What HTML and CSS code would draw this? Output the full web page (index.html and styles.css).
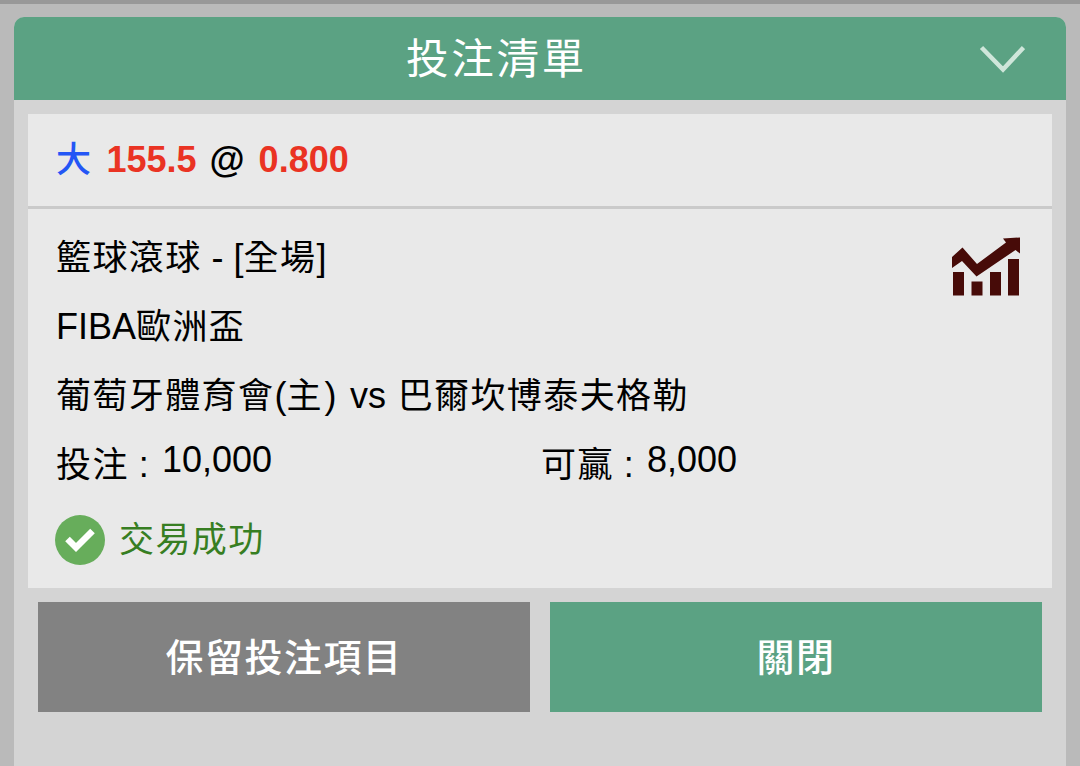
FILE: index.html
```
<!DOCTYPE html>
<html lang="zh-Hant">
<head>
    <meta charset="UTF-8">
    <meta name="viewport" content="width=device-width, initial-scale=1.0">
    <title>投注清單</title>
    <link rel="stylesheet" href="styles.css">
</head>
<body>
    <div class="bet-slip">
        <div class="slip-header">
            <div class="slip-title">投注清單</div>
            <svg class="chevron" viewBox="0 0 46 28" width="46" height="28">
                <path d="M2.500 2.500 L24 24.500 L44.500 2.500" fill="none" stroke="#cfe6da" stroke-width="4.500"/>
            </svg>
        </div>
        <div class="slip-card">
            <div class="odds-row">
                <span class="pick zh">大</span>
                <span class="line">155.5</span>
                <span class="at">@</span>
                <span class="odds">0.800</span>
            </div>
            <div class="details">
                <div class="info">
                    <p><span class="zh">籃球滾球</span> - [<span class="zh">全場</span>]</p>
                    <p>FIBA<span class="zh">歐洲盃</span></p>
                    <p class="teams"><span class="zh">葡萄牙體育會</span>(<span class="zh">主</span><span class="paren">)</span> vs <span class="zh">巴爾坎博泰夫格勒</span></p>
                </div>
                <svg class="stats-icon" viewBox="0 0 70 60" width="70" height="60">
                    <path d="M1 20 L11.500 10.500 L26 27 L55 5.500 L52 1.500 L69 0.500 L69 16.500 L64.500 13 L25.500 39.500 L11 24 L1 31 Z" fill="#470b08"/>
                    <path d="M2 35h11v23.500H2z M20.500 44.500h11v14h-11z M39 35h11v23.500H39z M57 22h11v36.500H57z" fill="#470b08"/>
                </svg>
            </div>
            <div class="amounts">
                <div class="amount"><span class="label"><span class="zh">投注</span> :</span><span class="value">10,000</span></div>
                <div class="amount"><span class="label"><span class="zh">可贏</span> :</span><span class="value">8,000</span></div>
            </div>
            <div class="status">
                <svg class="check" viewBox="0 0 50 50" width="50" height="50">
                    <circle cx="25" cy="25" r="25" fill="#67ad5b"/>
                    <path d="M12.500 24 L21 32.500 L37.500 16" fill="none" stroke="#fff" stroke-width="6.500"/>
                </svg>
                <span class="zh">交易成功</span>
            </div>
        </div>
        <div class="slip-buttons">
            <button class="btn btn-keep">保留投注項目</button>
            <button class="btn btn-close">關閉</button>
        </div>
    </div>
</body>
</html>
```
FILE: styles.css
```
* {
    box-sizing: border-box;
}
body {
    margin: 0;
    height: 766px;
    padding: 13.4px 14px 0;
    border-top: 4px solid #989898;
    background-color: #bababa;
    font-family: "Liberation Sans", "Noto Sans CJK TC", sans-serif;
    font-size: 36px;
    color: #000;
    overflow: hidden;
}
.bet-slip {
    height: 100%;
    background-color: #d4d4d4;
    border-radius: 10px 10px 0 0;
    overflow: hidden;
}
.slip-header {
    display: flex;
    align-items: center;
    height: 83px;
    padding-right: 41px;
    background-color: #5ba283;
    color: #fff;
}
.slip-title {
    flex: 1;
    text-align: center;
    font-size: 42.5px;
    letter-spacing: 2.7px;
    line-height: 83px;
    padding-top: 2px;
}
.slip-card {
    margin: 13.6px 14px 0;
    height: 474px;
    background-color: #e9e9e9;
}
.odds-row {
    display: flex;
    align-items: center;
    height: 95px;
    border-bottom: 3px solid #cacaca;
    padding: 0 28px;
    font-weight: bold;
    line-height: 92px;
}
.zh {
    font-size: 35px;
    letter-spacing: 1.4px;
}
.pick {
    color: #2456f5;
    font-weight: 500;
    margin-right: 14px;
}
.line,
.odds {
    color: #ea3323;
}
.at {
    margin: 0 14px 0 13px;
}
.details {
    display: flex;
    justify-content: space-between;
    padding: 14px 31px 0 28px;
}
.info p {
    margin: 0;
    height: 69px;
    line-height: 69px;
    white-space: nowrap;
}
.info .teams {
    word-spacing: 1.6px;
}
.paren {
    margin: 0 2px 0 1.6px;
}
.stats-icon {
    margin-top: 14px;
}
.amounts {
    display: grid;
    grid-template-columns: 485px 1fr;
    padding-left: 28px;
    height: 69px;
    line-height: 69px;
}
.amount {
    display: flex;
}
.label {
    width: 106px;
}
.value {
    line-height: 60px;
}
.status {
    display: flex;
    align-items: center;
    gap: 14px;
    margin-top: 16px;
    padding-left: 27px;
    height: 50px;
    line-height: 50px;
    color: #377e22;
}
.slip-buttons {
    display: flex;
    gap: 20px;
    padding: 14px 24px 0;
}
.btn {
    flex: 1;
    height: 110.5px;
    padding: 0 0 6px;
    border: none;
    color: #fff;
    font-family: "Noto Sans CJK TC", sans-serif;
    font-size: 38px;
    font-weight: 500;
    letter-spacing: 1.5px;
}
.btn-keep {
    background-color: #828282;
}
.btn-close {
    background-color: #5ba283;
}
```
